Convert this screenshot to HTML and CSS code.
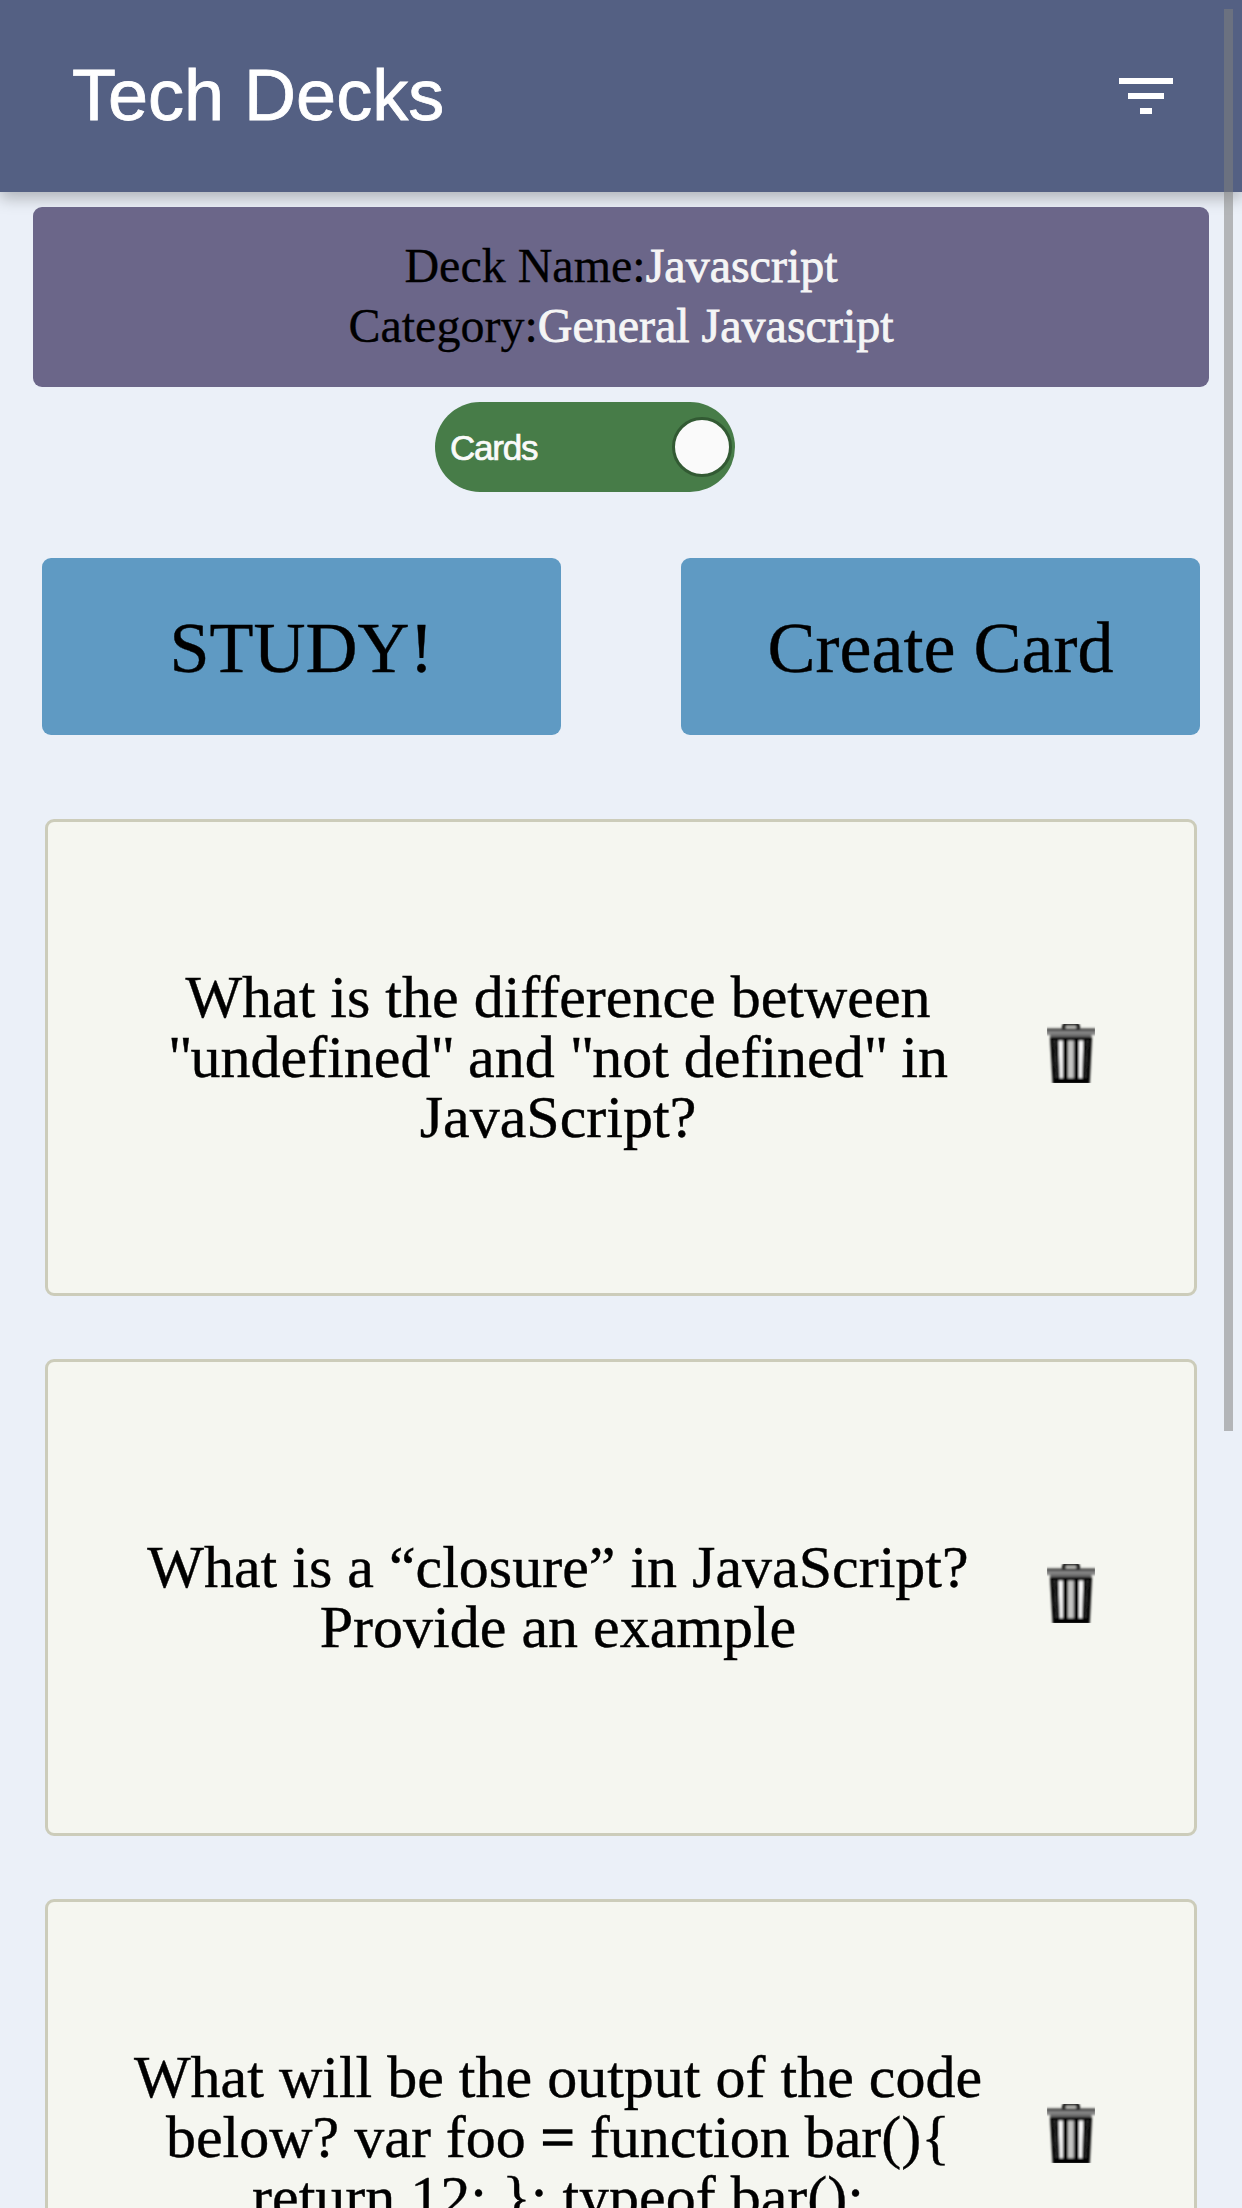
FILE: index.html
```html
<!DOCTYPE html>
<html lang="en">
<head>
<meta charset="utf-8">
<title>Tech Decks</title>
<link rel="stylesheet" href="styles.css">
</head>
<body>
<svg class="defs" width="0" height="0" aria-hidden="true">
  <defs>
    <filter id="soft" x="0" y="0" width="1" height="1"><feGaussianBlur stdDeviation="0.8"/></filter>
    <symbol id="trash" viewBox="0 0 48 60">
      <g filter="url(#soft)">
        <path d="M16.800 8V4Q16.800 1 19.800 1H28.200Q31.200 1 31.200 4V8" fill="#c4c4c0" stroke="#000" stroke-width="3.400"/>
        <rect x="-1" y="6" width="50" height="6" fill="#858585"/>
        <rect x="-1" y="5.500" width="50" height="2.300" fill="#303030"/>
        <rect x="3" y="11" width="41.500" height="4" fill="#6a6a6a"/>
        <path d="M3 14H45L42.700 61H5.700Z" fill="#050505"/>
        <path d="M7.500 17L9.500 55" stroke="#3a3a3a" stroke-width="1.200"/>
        <path d="M40.500 17L38.500 55" stroke="#3a3a3a" stroke-width="1.200"/>
        <path d="M11.500 17.500H15.800V55H12.800Z" fill="#fff"/>
        <rect x="21" y="17.500" width="5.800" height="37.500" fill="#c4c4c2"/>
        <path d="M32 17.500H36.300L35.100 55H32Z" fill="#fff"/>
      </g>
    </symbol>
  </defs>
</svg>

<header class="topbar">
  <h1 class="title">Tech Decks</h1>
  <svg class="menu" viewBox="0 0 54 36" fill="#fff"><path d="M0 0H54V6H0ZM9 15H45V21H9ZM21 30H33V36H21Z"/></svg>
</header>

<main class="page">
  <section class="deck">
    <p>Deck Name:<span class="value">Javascript</span></p>
    <p>Category:<span class="value">General Javascript</span></p>
  </section>

  <div class="switch"><span class="switch-label">Cards</span><span class="knob"></span></div>

  <nav class="actions">
    <a class="action">STUDY!</a>
    <a class="action">Create Card</a>
  </nav>

  <section class="cards">
    <article class="card">
      <p class="question">What is the difference between<br><span class="quote">"</span>undefined<span class="quote">"</span> and <span class="quote">"</span>not defined<span class="quote">"</span> in<br>JavaScript?</p>
      <svg class="trash"><use href="#trash"/></svg>
    </article>
    <article class="card">
      <p class="question">What is a “closure” in JavaScript?<br>Provide an example</p>
      <svg class="trash"><use href="#trash"/></svg>
    </article>
    <article class="card">
      <p class="question">What will be the output of the code<br>below? var foo <span class="operator">=</span> function bar(){<br>return 12; }; typeof bar();</p>
      <svg class="trash"><use href="#trash"/></svg>
    </article>
  </section>
</main>
<div class="scrollbar"></div>
</body>
</html>
```
FILE: styles.css
```css
* { box-sizing: border-box; }

body {
  margin: 0;
  height: 2208px;
  overflow: hidden;
  background: #ebf0f8;
  color: #000;
  font-family: "Liberation Serif", "Times New Roman", serif;
}

p, h1 { margin: 0; }

.defs { display: block; }

.topbar {
  display: flex;
  align-items: center;
  justify-content: space-between;
  height: 192px;
  padding: 0 69px 0 72px;
  background: #546083;
  box-shadow: 0 6px 15px rgba(0, 0, 0, 0.26);
}

.title {
  padding-bottom: 2px;
  font: 400 72px/82px "Liberation Sans", Arial, sans-serif;
  color: #fff;
  -webkit-text-stroke: 0.8px #fff;
}

.menu { width: 54px; height: 36px; }

.page { padding: 15px 33px 0; }

.deck {
  height: 180px;
  padding-top: 29px;
  border-radius: 9px;
  background: #6b6689;
  font-size: 48px;
  line-height: 60px;
  text-align: center;
  -webkit-text-stroke: 0.3px currentColor;
}

.value {
  color: #f5f5f5;
  -webkit-text-stroke: 0.8px #f5f5f5;
}

.switch {
  display: flex;
  align-items: center;
  justify-content: space-between;
  width: 300px;
  height: 90px;
  margin: 15px 0 0 402px;
  padding: 0 3px 0 15px;
  border-radius: 45px;
  background: #477c48;
}

.switch-label {
  padding-top: 1px;
  font: 400 35px/40px "Liberation Sans", Arial, sans-serif;
  letter-spacing: -1.2px;
  color: #fafafa;
  -webkit-text-stroke: 0.7px #fafafa;
}

.knob {
  width: 60px;
  height: 60px;
  border: 3px solid #325a33;
  border-radius: 50%;
  background: #fafafa;
}

.actions {
  display: flex;
  justify-content: space-between;
  padding: 66px 9px 0;
}

.action {
  width: 519px;
  height: 177px;
  border-radius: 9px;
  background: #5f9ac3;
  font-size: 72px;
  line-height: 181px;
  text-align: center;
  -webkit-text-stroke: 0.4px currentColor;
}

.cards {
  display: flex;
  flex-direction: column;
  gap: 63px;
  padding: 84px 12px 0;
}

.card {
  display: flex;
  align-items: center;
  flex: none;
  height: 477px;
  padding-left: 30px;
  border: 3px solid #ccccba;
  border-radius: 9px;
  background: #f5f6f0;
}

.question {
  width: 960px;
  padding-bottom: 2px;
  font-size: 60px;
  line-height: 60px;
  text-align: center;
  -webkit-text-stroke: 0.4px currentColor;
}

.quote { letter-spacing: -2px; }

.operator { -webkit-text-stroke-width: 1.6px; }

.trash {
  width: 48px;
  height: 60px;
  margin: 0 0 9px 9px;
}

.scrollbar {
  position: absolute;
  top: 9px;
  left: 1224px;
  width: 9px;
  height: 1422px;
  background: rgba(128, 128, 126, 0.53);
}
```
